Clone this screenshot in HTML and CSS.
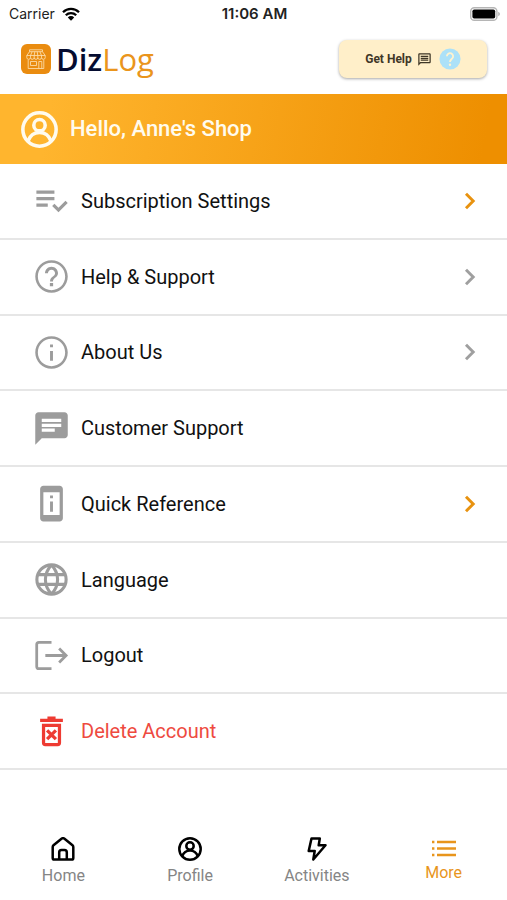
FILE: index.html
```html
<!DOCTYPE html>
<html lang="en">
<head>
<meta charset="utf-8">
<meta name="viewport" content="width=device-width, initial-scale=1">
<title>DizLog</title>
<link rel="stylesheet" href="styles.css">
</head>
<body>
<div class="status">
  <div class="carrier">
    <span>Carrier</span>
    <svg class="wifi" viewBox="0 0 18 14" aria-hidden="true"><path d="M1 5.200a11.400 11.400 0 0 1 16 0M3.800 8.200a7.400 7.400 0 0 1 10.400 0" fill="none" stroke="currentColor" stroke-width="2.300"/><path d="M5.800 10.400a4.600 4.600 0 0 1 6.400 0L9 13.700z" fill="currentColor"/></svg>
  </div>
  <span class="time">11:06 AM</span>
  <svg class="battery" viewBox="0 0 30 14" aria-hidden="true"><rect x=".7" y=".7" width="26.200" height="12.600" rx="3.600" fill="#fff" stroke="#b5b5b5" stroke-width="1.400"/><rect x="2.400" y="2.400" width="22.800" height="9.200" rx="1.800"/><path d="M28.200 4.800q1.800.8 1.800 2.200t-1.800 2.200z" fill="#b5b5b5"/></svg>
</div>

<header class="header">
  <div class="brand">
    <svg class="brand-icon" viewBox="0 0 30 30" aria-hidden="true">
      <rect width="30" height="30" rx="6" fill="#ea8c10"/>
      <g fill="none" stroke="#fde3b8" stroke-width=".8">
        <path d="M8.500 5.800h13v1.900h-13zM8.500 7.700 5.800 11.500v2.200a1.850 1.850 0 0 0 3.680 0 1.850 1.850 0 0 0 3.680 0 1.850 1.850 0 0 0 3.680 0 1.850 1.850 0 0 0 3.680 0 1.850 1.850 0 0 0 3.680 0V11.500L21.500 7.700M5.800 11.500h18.400M9.500 13.700v-2.200l1.600-3.800M13.200 13.700v-2.200l.6-3.800M16.800 13.700v-2.200l-.6-3.800M20.500 13.700v-2.200l-1.600-3.800M7.200 15.800v8.700h15.600v-8.700M9.500 17.500h6v4h-6zM17.800 24.500v-7h3v7"/>
      </g>
    </svg>
    <span class="brand-name"><b>Diz</b>Log</span>
  </div>
  <button class="get-help" type="button">
    <span>Get Help</span>
    <svg class="help-chat" viewBox="0 0 24 24" aria-hidden="true"><path fill="currentColor" d="M20 2H4c-1.100 0-2 .9-2 2v18l4-4h14c1.100 0 2-.9 2-2V4c0-1.100-.9-2-2-2zm0 14H5.200L4 17.200V4h16zM6 12h12v2H6zm0-3h12v2H6zm0-3h12v2H6z"/></svg>
    <svg class="help-mark" viewBox="0 0 24 24" aria-hidden="true"><circle cx="12" cy="12" r="11.500" fill="#ace1f8"/><path d="M8.600 9a3.400 3.400 0 1 1 5.800 2.400C13 12.700 12 13.200 12 15.300" fill="none" stroke="#fff3cf" stroke-width="2"/><circle cx="12" cy="18.200" r="1.300" fill="#fff3cf"/></svg>
  </button>
</header>

<section class="banner">
  <svg class="avatar" viewBox="0 0 24 24" aria-hidden="true"><g fill="none" stroke="currentColor" stroke-width="2.300"><circle cx="12" cy="12" r="10.800"/><circle cx="12" cy="9.200" r="3.700"/><path d="M4.500 19.500C6 15.500 8.700 13.900 12 13.900s6 1.600 7.500 5.600"/></g></svg>
  <h1>Hello, Anne's Shop</h1>
</section>

<main class="menu">
  <a class="row" href="#subscription">
    <svg class="icon" viewBox="0 0 24 24" aria-hidden="true"><path d="M13.800 9.800H2.700v2h11.100zm0-4H2.700v2h11.100zM2.700 15.800h7v-2h-7zM20.600 12.200l1.400 1.400-5.700 5.700-3.900-3.900 1.400-1.400 2.500 2.500z"/></svg>
    <span>Subscription Settings</span>
    <svg class="chevron accent" viewBox="0 0 24 24" aria-hidden="true"><path d="m9 6.600 5.400 5.400L9 17.400"/></svg>
  </a>
  <a class="row" href="#help">
    <svg class="icon" viewBox="0 0 24 24" aria-hidden="true"><path d="M11 18h2v-2h-2zm1-16C6.480 2 2 6.480 2 12s4.480 10 10 10 10-4.480 10-10S17.520 2 12 2zm0 18.400c-4.640 0-8.400-3.760-8.400-8.400S7.360 3.600 12 3.600s8.400 3.760 8.400 8.400-3.760 8.400-8.400 8.400zM12 6c-2.210 0-4 1.790-4 4h1.800c0-1.200 1-2.200 2.200-2.200s2.200 1 2.200 2.200c0 2-3.100 1.900-3.100 5h1.800c0-2.250 3.100-2.500 3.100-5 0-2.210-1.790-4-4-4z"/></svg>
    <span>Help &amp; Support</span>
    <svg class="chevron" viewBox="0 0 24 24" aria-hidden="true"><path d="m9 6.600 5.400 5.400L9 17.400"/></svg>
  </a>
  <a class="row" href="#about">
    <svg class="icon" viewBox="0 0 24 24" aria-hidden="true"><path d="M11.100 11h1.800v6h-1.800zm0-4h1.800v1.800h-1.800zM12 2C6.480 2 2 6.480 2 12s4.480 10 10 10 10-4.480 10-10S17.520 2 12 2zm0 18.400c-4.640 0-8.400-3.760-8.400-8.400S7.360 3.600 12 3.600s8.400 3.760 8.400 8.400-3.760 8.400-8.400 8.400z"/></svg>
    <span>About Us</span>
    <svg class="chevron" viewBox="0 0 24 24" aria-hidden="true"><path d="m9 6.600 5.400 5.400L9 17.400"/></svg>
  </a>
  <a class="row" href="#customer-support">
    <svg class="icon" viewBox="0 0 24 24" aria-hidden="true"><path d="M20 2H4c-1.100 0-1.990.9-1.990 2L2 22l4-4h14c1.100 0 2-.9 2-2V4c0-1.100-.9-2-2-2zM6 9h12v2H6zm8 5H6v-2h8zm4-6H6V6h12z"/></svg>
    <span>Customer Support</span>
  </a>
  <a class="row" href="#reference">
    <svg class="icon" viewBox="0 0 24 24" aria-hidden="true"><path d="M11.100 7h1.800v1.800h-1.800zm0 3.800h1.800V17h-1.800zM17 1.010 7 1c-1.100 0-2 .9-2 2v18c0 1.100.9 2 2 2h10c1.100 0 2-.9 2-2V3c0-1.100-.9-1.990-2-1.990zM17 19H7V5h10z"/></svg>
    <span>Quick Reference</span>
    <svg class="chevron accent" viewBox="0 0 24 24" aria-hidden="true"><path d="m9 6.600 5.400 5.400L9 17.400"/></svg>
  </a>
  <a class="row" href="#language">
    <svg class="icon line" viewBox="0 0 24 24" aria-hidden="true"><g stroke-width="1.900"><circle cx="12" cy="12" r="9"/><path d="M3.500 9h17M3.500 15h17M12 3c-5 5.400-5 12.600 0 18M12 3c5 5.400 5 12.600 0 18"/></g></svg>
    <span>Language</span>
  </a>
  <a class="row" href="#logout">
    <svg class="icon line" viewBox="0 0 24 24" aria-hidden="true"><path d="M12 3.900H4.300Q2.900 3.900 2.900 5.300v13.400q0 1.400 1.400 1.400H12M8.200 12h13M16.700 7.700 21 12l-4.300 4.300"/></svg>
    <span>Logout</span>
  </a>
  <a class="row danger" href="#delete">
    <svg class="icon line" viewBox="0 0 24 24" aria-hidden="true"><path d="M5 5.100h14M9.500 3.800h5M7.100 8.200h9.800v10.700q0 1.100-1.100 1.100H8.200q-1.100 0-1.100-1.100zM9.300 11.300l5.400 5.400M14.700 11.300l-5.400 5.400" stroke-width="2"/></svg>
    <span>Delete Account</span>
  </a>
</main>

<nav class="tabs">
  <a class="tab" href="#home">
    <svg viewBox="0 0 24 24" aria-hidden="true"><path d="M1.700 10q0-1 .8-1.700L10.800 1.600q1.200-.9 2.400 0l8.300 6.700q.8.700.8 1.700v11q0 1.600-1.600 1.600H3.300q-1.600 0-1.600-1.600zM8.200 22.600v-7.200q0-2.300 2.300-2.300h3q2.300 0 2.300 2.300v7.200"/></svg>
    <span>Home</span>
  </a>
  <a class="tab" href="#profile">
    <svg viewBox="0 0 24 24" aria-hidden="true"><circle cx="12" cy="12" r="10.700"/><circle cx="12" cy="9" r="3.700"/><path d="M4.200 19.300C5.700 15.300 8.600 13.500 12 13.500s6.300 1.800 7.800 5.800"/></svg>
    <span>Profile</span>
  </a>
  <a class="tab" href="#activities">
    <svg viewBox="0 0 24 24" aria-hidden="true"><path d="M6.500 1.500h8.300L13.700 8.300h6.800L8.300 22.500 9.700 14H3.700z" stroke-linejoin="round"/></svg>
    <span>Activities</span>
  </a>
  <a class="tab current" href="#more" aria-current="page">
    <svg viewBox="0 0 24 24" aria-hidden="true"><path d="M0 5h2.400M0 11.500h2.400M0 18h2.400M5 5h19M5 11.500h19M5 18h19"/></svg>
    <span>More</span>
  </a>
</nav>
</body>
</html>
```
FILE: styles.css
```css
* {
  box-sizing: border-box;
}

body {
  margin: 0;
  min-height: 100vh;
  display: flex;
  flex-direction: column;
  background: #fff;
  color: #111;
  font-family: Roboto, "Liberation Sans", sans-serif;
}

svg {
  display: block;
  flex: none;
}

a {
  color: inherit;
  text-decoration: none;
}

.status {
  display: grid;
  grid-template-columns: 1fr auto 1fr;
  align-items: center;
  height: 28px;
  padding: 0 7px 0 9px;
  font: 14px/20px Inter, "Liberation Sans", sans-serif;
  color: #222;
}

.carrier {
  display: flex;
  align-items: center;
  gap: 7px;
}

.wifi {
  width: 18px;
  height: 14px;
  color: #000;
}

.time {
  font-size: 15px;
  font-weight: 600;
}

.battery {
  width: 30px;
  height: 14px;
  justify-self: end;
}

.header {
  display: flex;
  align-items: center;
  justify-content: space-between;
  height: 66px;
  padding: 0 20px 4px 21px;
}

.brand {
  display: flex;
  align-items: center;
  gap: 5px;
}

.brand-icon {
  width: 30px;
  height: 30px;
}

.brand-name {
  font: 31px/40px "Open Sans", sans-serif;
  color: #ea951c;
}

.brand-name b {
  font-weight: 600;
  color: #050c30;
}

.get-help {
  display: flex;
  align-items: center;
  justify-content: center;
  width: 148px;
  height: 38px;
  padding: 0;
  border: 0;
  border-radius: 8px;
  background: #ffefc9;
  box-shadow: 0 1px 3px rgba(0, 0, 0, 0.35);
  color: #3f3727;
  font: 700 12px/16px Roboto, sans-serif;
}

.help-chat {
  width: 15px;
  height: 15px;
  margin: 0 7px 0 5px;
}

.help-mark {
  width: 22px;
  height: 22px;
}

.banner {
  display: flex;
  align-items: center;
  gap: 12px;
  height: 70px;
  padding: 0 21px;
  background: linear-gradient(100deg, #ffb52e 10%, #ee8f00 95%);
  color: #fffbee;
}

.banner h1 {
  margin: 0;
  font-size: 22px;
  line-height: 24px;
  font-weight: 500;
}

.avatar {
  width: 37px;
  height: 37px;
}

.menu {
  flex: 1;
  display: grid;
  grid-auto-rows: 1fr;
}

.row {
  display: flex;
  align-items: center;
  gap: 10px;
  padding: 0 21px 0 32px;
  border-bottom: 2px solid #e6e6e6;
  font-size: 20px;
  line-height: 24px;
}

.icon {
  width: 39px;
  height: 39px;
  fill: #9c9c9c;
}

.line {
  fill: none;
  stroke: #9c9c9c;
  stroke-width: 1.7;
}

.chevron {
  width: 32px;
  height: 32px;
  margin-left: auto;
  fill: none;
  stroke: #9f9f9f;
  stroke-width: 2.2;
}

.accent {
  stroke: #e8920f;
}

.danger {
  color: #ee4a40;
}

.danger .line {
  stroke: #ee3b32;
}

.tabs {
  display: grid;
  grid-template-columns: repeat(4, 1fr);
  padding: 67px 0 14px;
}

.tab {
  display: flex;
  flex-direction: column;
  align-items: center;
  gap: 5px;
  color: #858585;
  font-size: 16px;
  line-height: 20px;
}

.tab svg {
  width: 24px;
  height: 24px;
  fill: none;
  stroke: #000;
  stroke-width: 2.5;
}

.current {
  gap: 2px;
  color: #e8951c;
}

.tab.current svg {
  stroke: #e8951c;
}
```
